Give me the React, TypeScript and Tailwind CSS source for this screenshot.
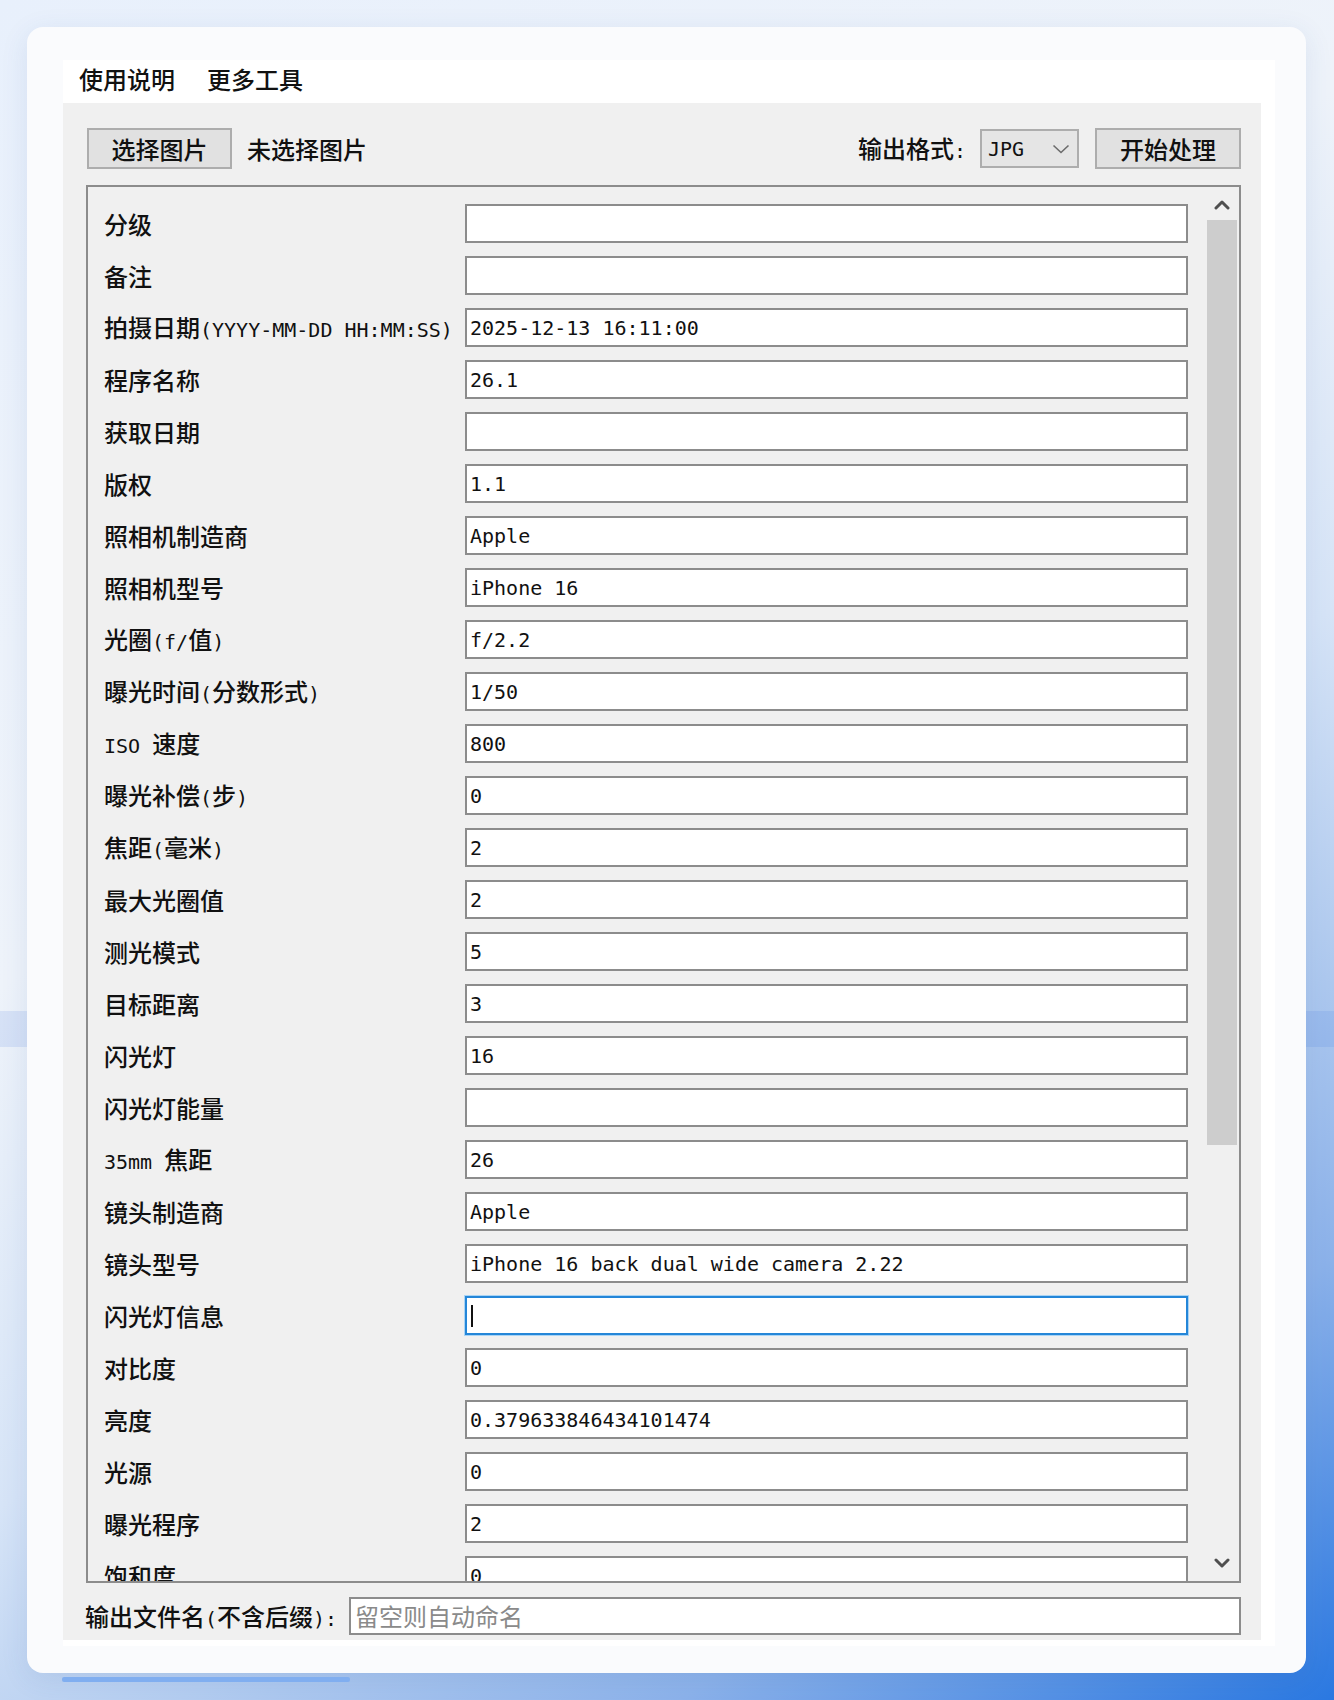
import React from "react";

type Row = { label: string; value: string; focused?: boolean };

const rows: Row[] = [
  { label: "分级", value: "" },
  { label: "备注", value: "" },
  { label: "拍摄日期(YYYY-MM-DD HH:MM:SS)", value: "2025-12-13 16:11:00" },
  { label: "程序名称", value: "26.1" },
  { label: "获取日期", value: "" },
  { label: "版权", value: "1.1" },
  { label: "照相机制造商", value: "Apple" },
  { label: "照相机型号", value: "iPhone 16" },
  { label: "光圈(f/值)", value: "f/2.2" },
  { label: "曝光时间(分数形式)", value: "1/50" },
  { label: "ISO 速度", value: "800" },
  { label: "曝光补偿(步)", value: "0" },
  { label: "焦距(毫米)", value: "2" },
  { label: "最大光圈值", value: "2" },
  { label: "测光模式", value: "5" },
  { label: "目标距离", value: "3" },
  { label: "闪光灯", value: "16" },
  { label: "闪光灯能量", value: "" },
  { label: "35mm 焦距", value: "26" },
  { label: "镜头制造商", value: "Apple" },
  { label: "镜头型号", value: "iPhone 16 back dual wide camera 2.22" },
  { label: "闪光灯信息", value: "", focused: true },
  { label: "对比度", value: "0" },
  { label: "亮度", value: "0.379633846434101474" },
  { label: "光源", value: "0" },
  { label: "曝光程序", value: "2" },
  { label: "饱和度", value: "0" },
];

// Half-width (ASCII) runs use a monospace face; CJK runs use the CJK face.
function Mixed({ text }: { text: string }) {
  const parts = text.split(/([\x00-\x7F]+)/).filter((p) => p.length > 0);
  return (
    <>
      {parts.map((p, i) =>
        /^[\x00-\x7F]+$/.test(p) ? (
          <span
            key={i}
            className="whitespace-pre font-['DejaVu_Sans_Mono',monospace] text-[20px] font-normal"
          >
            {p}
          </span>
        ) : (
          <span key={i}>{p}</span>
        )
      )}
    </>
  );
}

function Field({ value, focused }: { value: string; focused?: boolean }) {
  if (focused) {
    return (
      <div className="flex h-[39px] w-[723px] shrink-0 items-center border-2 border-[#2486d8] bg-white pl-[4px] shadow-[0_0_0_1px_#a9d4f5]">
        <span className="h-[22px] w-[2px] bg-[#111]" />
      </div>
    );
  }
  return (
    <div className="flex h-[39px] w-[723px] shrink-0 items-center border-2 border-[#8c8c8c] bg-white pl-[3px]">
      <span className="whitespace-pre font-['DejaVu_Sans_Mono',monospace] text-[20px] font-normal leading-none text-[#111]">
        {value}
      </span>
    </div>
  );
}

function Chevron({ up }: { up?: boolean }) {
  return (
    <svg width="16" height="12" viewBox="0 0 16 12">
      <polyline
        points={up ? "2,9 8,3 14,9" : "2,3 8,9 14,3"}
        fill="none"
        stroke="#4f4f4f"
        strokeWidth="3"
        strokeLinecap="round"
        strokeLinejoin="round"
      />
    </svg>
  );
}

function Scrollbar() {
  return (
    <div className="mr-[2px] flex w-[30px] shrink-0 flex-col bg-[#f0f0f0]">
      <div className="flex h-[33px] items-center justify-center pt-[2px]">
        <Chevron up />
      </div>
      <div className="h-[925px] bg-[#cdcdcd]" />
      <div className="flex-1" />
      <div className="flex h-[34px] items-center justify-center pb-[2px]">
        <Chevron />
      </div>
    </div>
  );
}

export default function App() {
  return (
    <div className="relative h-[1700px] w-full overflow-hidden bg-[linear-gradient(146deg,#e8f0fc_0%,#eef3fa_38%,#d6e4f7_58%,#b4cdf0_70%,#8cb2ea_83%,#2a78e1_100%)] font-['Noto_Sans_CJK_SC',sans-serif] text-[24px] font-medium leading-none text-[#111]">
      {/* soft band running behind the card */}
      <div className="absolute inset-x-0 top-[1011px] h-[36px] bg-[#2f6fdf]/[0.12]" />

      <div className="relative pl-[27px] pt-[27px]">
        <div className="h-[1646px] w-[1279px] rounded-[16px] bg-[#fafbfd] pb-[27px] pl-[36px] pr-[31px] pt-[33px] shadow-[0_6px_28px_rgba(40,80,150,0.10)]">
          <div className="flex h-full flex-col bg-white pb-[6px] pr-[14px]">
            {/* menu */}
            <div className="flex h-[43px] shrink-0 items-center gap-[32px] pb-[5px] pl-[16px]">
              <span>使用说明</span>
              <span>更多工具</span>
            </div>

            {/* main panel */}
            <div className="flex flex-1 flex-col bg-[#f0f0f0] pl-[23px] pr-[20px] pt-[25px]">
              {/* toolbar */}
              <div className="flex h-[41px] shrink-0 items-center">
                <button className="ml-[1px] flex h-[41px] w-[145px] items-center justify-center border-2 border-[#adadad] bg-[#e1e1e1] text-[24px]">
                  选择图片
                </button>
                <span className="ml-[15px]">未选择图片</span>
                <div className="ml-auto flex items-center">
                  <span className="flex items-baseline">
                    <Mixed text="输出格式:" />
                  </span>
                  <div className="ml-[14px] flex h-[39px] w-[99px] items-center border-2 border-[#adadad] bg-[#e5e5e5] pl-[6px] pr-[7px]">
                    <span className="font-['DejaVu_Sans_Mono',monospace] text-[20px] font-normal">JPG</span>
                    <svg className="ml-auto" width="18" height="10" viewBox="0 0 18 10">
                      <polyline
                        points="1.5,1.5 9,8.5 16.5,1.5"
                        fill="none"
                        stroke="#6b6b6b"
                        strokeWidth="1.6"
                      />
                    </svg>
                  </div>
                  <button className="ml-[16px] flex h-[41px] w-[146px] items-center justify-center border-2 border-[#adadad] bg-[#e1e1e1] text-[24px]">
                    开始处理
                  </button>
                </div>
              </div>

              {/* metadata list */}
              <div className="mt-[16px] flex h-[1398px] shrink-0 overflow-hidden border-2 border-[#8c8c8c] bg-[#f0f0f0]">
                <div className="flex-1 overflow-hidden pl-[16px] pt-[17px]">
                  <div className="flex flex-col gap-[13px]">
                    {rows.map((r) => (
                      <div key={r.label} className="flex h-[39px] items-center">
                        <div className="flex w-[361px] shrink-0 items-baseline">
                          <Mixed text={r.label} />
                        </div>
                        <Field value={r.value} focused={r.focused} />
                      </div>
                    ))}
                  </div>
                </div>
                <Scrollbar />
              </div>

              {/* output file name */}
              <div className="mt-[14px] flex h-[38px] shrink-0 items-center">
                <span className="-ml-[1px] flex items-baseline">
                  <Mixed text="输出文件名(不含后缀):" />
                </span>
                <div className="ml-auto flex h-[38px] w-[892px] items-center border-2 border-[#8c8c8c] bg-white pl-[4px] font-normal text-[#8a8a8a]">
                  留空则自动命名
                </div>
              </div>
            </div>
          </div>
        </div>

        {/* progress strip under the card */}
        <div className="ml-[35px] mt-[4px] h-[5px] w-[288px] rounded-[2px] bg-[#80aef0]" />
      </div>
    </div>
  );
}
